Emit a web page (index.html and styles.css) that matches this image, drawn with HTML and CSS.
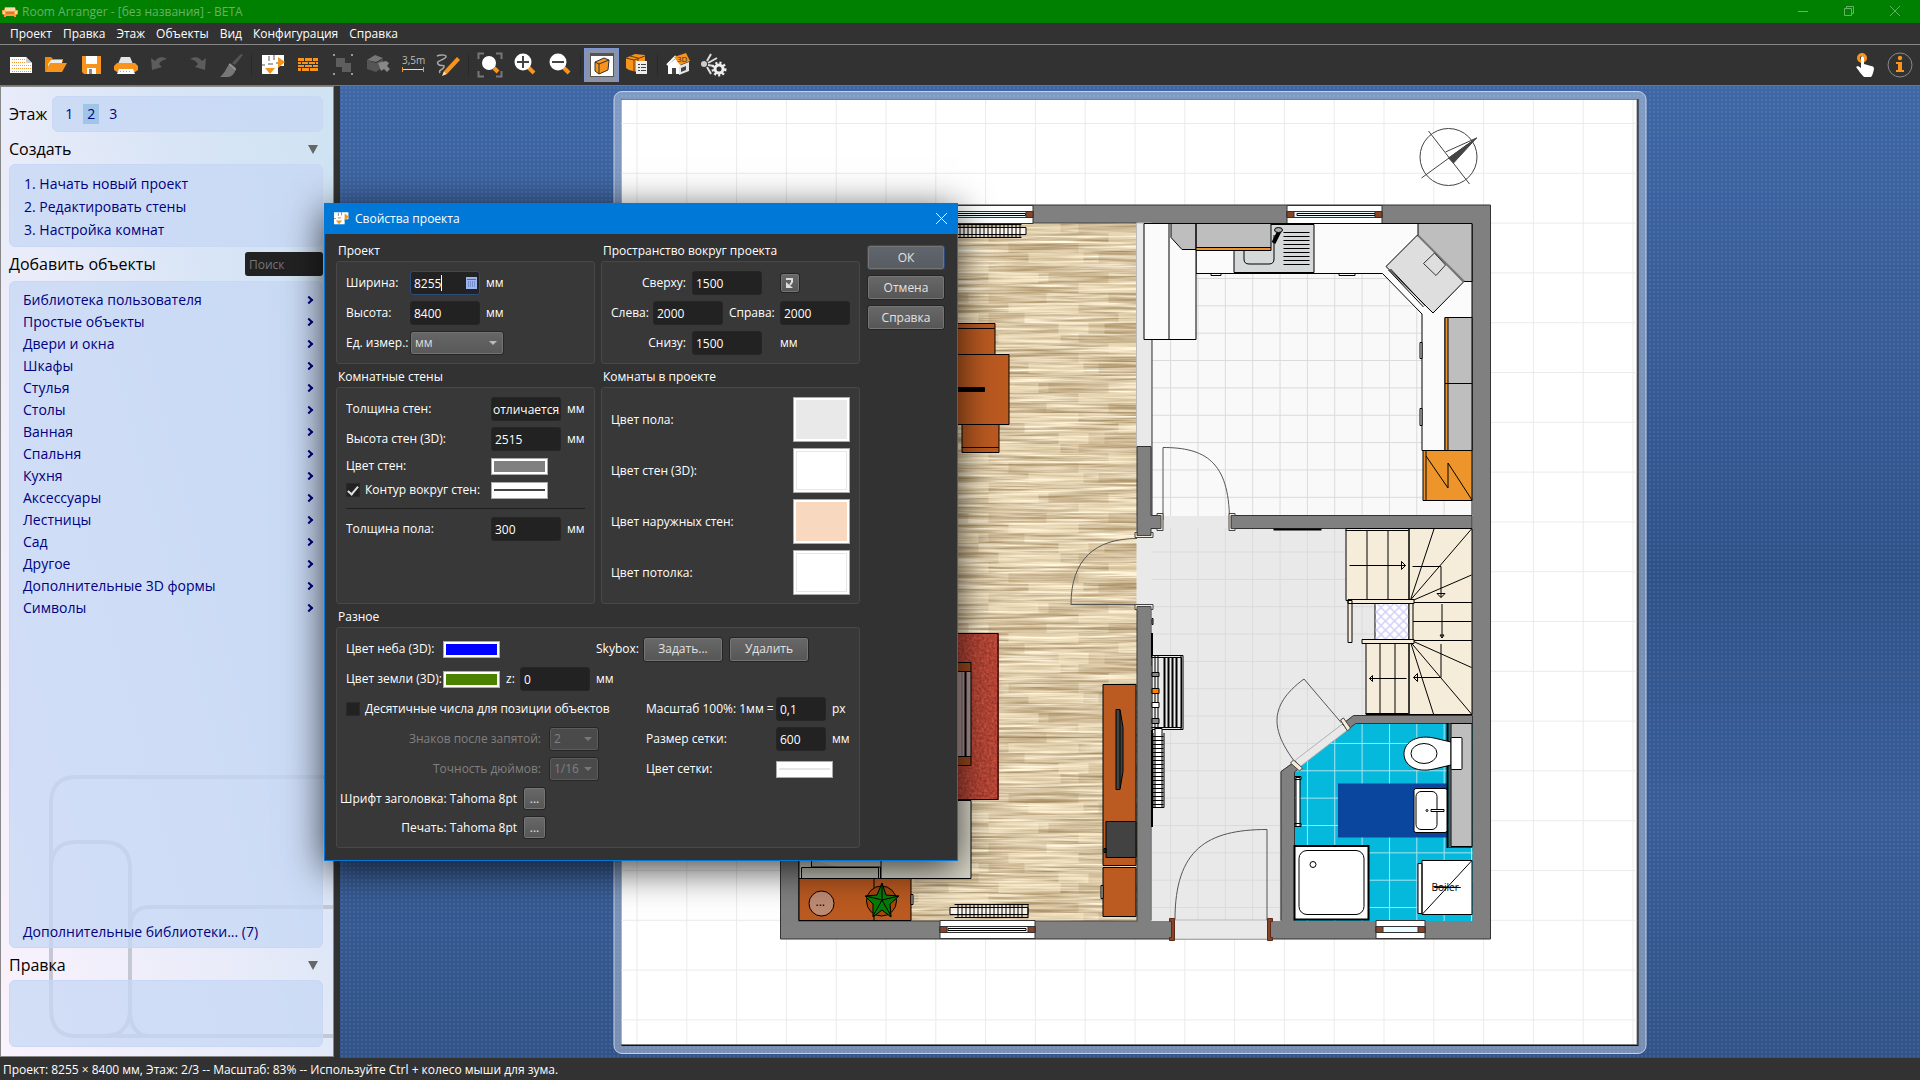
FILE: index.html
```
<!DOCTYPE html>
<html lang="ru">
<head>
    <meta charset="UTF-8">
    <meta name="viewport" content="width=device-width, initial-scale=1.0">
    <title>Room Arranger - [без названия] - BETA</title>
    <link rel="stylesheet" href="styles.css">
</head>
<body>

    <!-- Title bar -->
    <header class="titlebar">
        <svg class="app-icon" width="16" height="10" viewBox="0 0 16 10"><path d="M3 0h10l1 3h2v4l-2 1v2h-2V9H4v1H2V8L0 7V3h2z" fill="#ff9a3c"/><path d="M3 1h10v3H3zM1 4h2v3H1zM13 4h2v3h-2z" fill="#ffd9a8"/><path d="M4 6h8" stroke="#c85a10"/></svg>
        <span class="app-title">Room Arranger - [без названия] - BETA</span>
        <div class="window-buttons">
            <button type="button" aria-label="Свернуть"><svg width="10" height="10" viewBox="0 0 10 10"><path d="M0 5.500h10"/></svg></button>
            <button type="button" aria-label="Развернуть"><svg width="10" height="10" viewBox="0 0 10 10"><path d="M.5 2.500h7v7h-7zM2.500 2V.5h7v7H8"/></svg></button>
            <button type="button" aria-label="Закрыть"><svg width="10" height="10" viewBox="0 0 10 10"><path d="M0 0l10 10M10 0L0 10"/></svg></button>
        </div>
    </header>

    <!-- Menu -->
    <nav class="menu">
        <a href="#">Проект</a>
        <a href="#">Правка</a>
        <a href="#">Этаж</a>
        <a href="#">Объекты</a>
        <a href="#">Вид</a>
        <a href="#">Конфигурация</a>
        <a href="#">Справка</a>
    </nav>

    <!-- Toolbar -->
    <div class="toolbar">
        <button type="button" aria-label="Новый"><svg viewBox="0 0 26 26"><path d="M2 5h16l6 6v10H2z" fill="#fff"/><path d="M18 5v6h6z" fill="#ccc"/><path d="M4 7.500h13M4 10.500h13M4 13.500h19M4 16.500h19M4 19.500h19" stroke="#f39a2b" stroke-dasharray="1 1"/></svg></button>
        <button type="button" aria-label="Открыть"><svg viewBox="0 0 26 26"><path d="M2 20V5h6l2 2h10v3H8z" fill="#f08a00"/><path d="M5 12l3-4h11v3H9l-4 7z" fill="#eee"/><path d="M2 20l5-9h17l-5 9z" fill="#f7941d"/></svg></button>
        <button type="button" aria-label="Сохранить"><svg viewBox="0 0 26 26"><path d="M4 4h19v18H6l-2-2z" fill="#f7941d"/><path d="M8 4h11v8H8zM9 16h9v6H9z" fill="#fff"/><path d="M11 17h3v5h-3z" fill="#888"/></svg></button>
        <button type="button" aria-label="Печать"><svg viewBox="0 0 26 26"><path d="M8 5h9l3 7H5z" fill="#e4e4e4"/><path d="M4 11h18l3 3v4l-3 2H4l-3-2v-4z" fill="#f7941d"/><path d="M6 17h14l2 5H4z" fill="#fff"/><path d="M7 19.500h12" stroke="#f7941d" stroke-dasharray="1 2"/></svg></button>
        <button type="button" aria-label="Отменить" disabled><svg viewBox="0 0 26 26"><path d="M3 6l1 12 10-3-3-3c2-3 4-4 8-5-5-3-9-2-12 2z" fill="#5c5c5c"/></svg></button>
        <button type="button" aria-label="Повторить" disabled><svg viewBox="0 0 26 26"><path d="M23 6l-1 12-10-3 3-3c-2-3-4-4-8-5 5-3 9-2 12 2z" fill="#5c5c5c"/></svg></button>
        <button type="button" aria-label="Очистить" disabled><svg viewBox="0 0 26 26"><path d="M23 2l2 1-8 10-3-2z" fill="#555"/><path d="M12 11l6 5c-1 6-5 9-8 9H2c5-4 6-9 10-14z" fill="#777"/><path d="M11 12l7 6" stroke="#aaa"/></svg></button>
        <span class="separator"></span>
        <button type="button" aria-label="Свойства проекта"><svg viewBox="0 0 26 26"><path d="M2 3h22v11h-6v8H2z" fill="#fff"/><path d="M9 4v5M14 3v5M8 12h5M2 13h3M16 11h3" stroke="#555"/><path d="M18 5l7 5-7 6zM5 16h10l-5 6z" fill="#f7941d"/></svg></button>
        <button type="button" aria-label="Стены"><svg viewBox="0 0 26 26"><path d="M3 6h20v13H3z" fill="#f7941d"/><path d="M3 9.500h20M3 12.500h20M3 15.500h20M9.500 6v3M17.500 6v3M6.500 10v2M13.500 10v2M20.500 10v2M9.500 13v2M17.500 13v2M6.500 16v3M14.500 16v3" stroke="#333"/></svg></button>
        <button type="button" aria-label="Группа" disabled><svg viewBox="0 0 26 26"><path d="M6 6h9v9H6zM12 11h9v9h-9z" fill="#5e5e5e"/><path d="M3 2h2v2H3zM21 2h2v2h-2zM3 21h2v2H3zM21 21h2v2h-2z" fill="#999"/></svg></button>
        <button type="button" aria-label="Объект" disabled><svg viewBox="0 0 26 26"><path d="M2 8l8-5 8 3-7 4z" fill="#777"/><path d="M2 8l9 3v9l-9-3zM11 11l7-4v8l-7 5z" fill="#555"/><path d="M24 11l-2 3 3 3-3 3-3-3-3 2-3-8 8-2z" fill="#888"/></svg></button>
        <button type="button" aria-label="Размеры"><svg viewBox="0 0 26 26"><text x="2" y="12" font-size="10" fill="#bbb">3,5m</text><path d="M3 17.500h20" stroke="#ddd"/><path d="M2.500 15v5M23.500 15v5" stroke="#f7941d"/></svg></button>
        <button type="button" aria-label="Линия"><svg viewBox="0 0 26 26"><path d="M2 4c4-2 12-1 8 2s-9 3-7 6 7 0 6 3-6 3-4 6" fill="none" stroke="#aaa" stroke-width="1.500"/><path d="M9 19L22 5l3 3-13 14z" fill="#f7941d"/><path d="M9 19l3 3-5 2z" fill="#ffe0b0"/></svg></button>
        <span class="separator"></span>
        <button type="button" aria-label="Показать всё"><svg viewBox="0 0 26 26"><path d="M1.500 7V1.500H7M19 1.500h5.500V7M1.500 19v5.500H7M24.500 19v5.500H19" fill="none" stroke="#777" stroke-width="2"/><path d="M17 16l4 4" stroke="#f7941d" stroke-width="4"/><circle cx="12" cy="11" r="7" fill="#fff"/></svg></button>
        <button type="button" aria-label="Увеличить"><svg viewBox="0 0 26 26"><path d="M16 15l6 6" stroke="#f7941d" stroke-width="4"/><circle cx="11" cy="10" r="8.500" fill="#fff"/><path d="M11 4v12M5 10h12" stroke="#444" stroke-width="2"/></svg></button>
        <button type="button" aria-label="Уменьшить"><svg viewBox="0 0 26 26"><path d="M16 15l6 6" stroke="#f7941d" stroke-width="4"/><circle cx="11" cy="10" r="8.500" fill="#fff"/><path d="M5 10h12" stroke="#444" stroke-width="2"/></svg></button>
        <span class="separator"></span>
        <button type="button" class="active" aria-label="Объекты 3D"><svg viewBox="0 0 26 26"><path d="M1 1h24v24H1z" fill="#555"/><path d="M2 4h22v20H2z" fill="#fff"/><path d="M6 10l9-4 5 2-1 10-9 4-4-3z" fill="#f7941d" stroke="#333"/><path d="M6 10l4 2 10-4M10 12v10" fill="none" stroke="#333"/></svg></button>
        <button type="button" aria-label="Список объектов"><svg viewBox="0 0 26 26"><path d="M2 6l9-4 10 1v7l-8 10-8-2-3-2z" fill="#f7941d"/><path d="M2 6l8 2 11-4M10 8v12M6 4l8 2v6" fill="none" stroke="#6b3a00"/><path d="M12 9h11v13H12z" fill="#eee"/><path d="M14 12.500h2M14 15.500h2M14 18.500h2M17 12.500h5M17 15.500h5M17 18.500h5" stroke="#444"/></svg></button>
        <span class="separator"></span>
        <button type="button" aria-label="3D"><svg viewBox="0 0 26 26"><path d="M2 13l7-6 5 7v8H2z" fill="#fff"/><path d="M13 14l10-4v9l-10 4z" fill="#e6e6e6"/><path d="M1 13l8-8 5 9" fill="none" stroke="#fff" stroke-width="2"/><path d="M8 5l12-4 4 8-10 4z" fill="#f7941d"/><path d="M6 16h4v6H6zM15 16l5-2v4l-5 2z" fill="#444"/><text x="11" y="10" font-size="8" fill="#333">3D</text></svg></button>
        <button type="button" aria-label="Визуализация"><svg viewBox="0 0 26 26"><circle cx="3" cy="12" r="3" fill="#ccc"/><path d="M6 9l4-7M7 11l9-5M7 13l6 1M6 15l4 7" stroke="#ddd" stroke-width="2"/><circle cx="18" cy="17" r="4" fill="none" stroke="#eee" stroke-width="3"/><circle cx="18" cy="17" r="6" fill="none" stroke="#eee" stroke-width="3" stroke-dasharray="2 2"/></svg></button>
        <span class="spacer"></span>
        <button type="button" aria-label="Касание"><svg viewBox="0 0 26 26"><circle cx="10" cy="6" r="3.500" fill="none" stroke="#f7941d" stroke-width="3"/><path d="M9 5c1-1 3-1 3 1v6l7 2c2 0 3 1 3 3-1 5-2 7-3 8h-7c-3-3-5-6-8-10l2-1 3 2z" fill="#fff"/></svg></button>
        <button type="button" aria-label="Сведения"><svg viewBox="0 0 26 26"><circle cx="13" cy="13" r="12" fill="none" stroke="#888"/><circle cx="13" cy="6" r="2.200" fill="#f7941d"/><path d="M9 10h6v8h2v2H9v-2h2v-6H9z" fill="#f7941d"/></svg></button>
    </div>

    <main class="workspace">
        <!-- Side panel -->
        <aside class="sidebar">
            <svg class="sidebar-art" width="284" height="264" viewBox="0 0 284 264"><g fill="none" stroke="#c3c8d4" stroke-width="4"><path d="M284 3H27Q2 3 2 30v205q0 27 25 27h257"/><path d="M2 95q0-27 25-27h27q27 0 27 27v140q0 27-27 27"/><path d="M284 133H101q-20 0-20 22v80q0 27 20 27"/></g></svg>
            <div class="floor">
                <h2>Этаж</h2>
                <div class="panel floor-list">
                    <button type="button">1</button>
                    <button type="button" class="current">2</button>
                    <button type="button">3</button>
                </div>
            </div>
            <div class="panel-title"><h2>Создать</h2><span class="triangle"></span></div>
            <div class="panel steps">
                <a href="#">1. Начать новый проект</a>
                <a href="#">2. Редактировать стены</a>
                <a href="#">3. Настройка комнат</a>
            </div>
            <div class="panel-title search-title">
                <h2>Добавить объекты</h2>
                <input type="text" class="search" placeholder="Поиск" aria-label="Поиск">
            </div>
            <div class="panel library">
                <a href="#">Библиотека пользователя<span class="chevron"></span></a>
                <a href="#">Простые объекты<span class="chevron"></span></a>
                <a href="#">Двери и окна<span class="chevron"></span></a>
                <a href="#">Шкафы<span class="chevron"></span></a>
                <a href="#">Стулья<span class="chevron"></span></a>
                <a href="#">Столы<span class="chevron"></span></a>
                <a href="#">Ванная<span class="chevron"></span></a>
                <a href="#">Спальня<span class="chevron"></span></a>
                <a href="#">Кухня<span class="chevron"></span></a>
                <a href="#">Аксессуары<span class="chevron"></span></a>
                <a href="#">Лестницы<span class="chevron"></span></a>
                <a href="#">Сад<span class="chevron"></span></a>
                <a href="#">Другое<span class="chevron"></span></a>
                <a href="#">Дополнительные 3D формы<span class="chevron"></span></a>
                <a href="#">Символы<span class="chevron"></span></a>
                <a href="#" class="more">Дополнительные библиотеки... (7)</a>
            </div>
            <div class="panel-title edit-title"><h2>Правка</h2><span class="triangle"></span></div>
            <div class="panel edit"></div>
        </aside>

        <!-- Floor plan -->
        <section class="canvas">
            <svg class="plan" viewBox="614 91 1033 963">
                <defs>
                    <pattern id="grid" x="637" y="123" width="49.800" height="49.800" patternUnits="userSpaceOnUse"><path d="M.5 0v49.800M0 .5h49.800" stroke="#ebebeb"/></pattern>
                    <pattern id="tiles" x="1198" y="278" width="27.350" height="27.350" patternUnits="userSpaceOnUse"><path d="M.5 0v27.350M0 .5h27.350" stroke="#dadada"/></pattern>
                    <pattern id="bathTiles" x="1198" y="278" width="27.350" height="27.350" patternUnits="userSpaceOnUse"><path d="M.5 0v27.350M0 .5h27.350" stroke="#a9e3ef"/></pattern>
                    <pattern id="planks" x="799" y="223" width="190" height="110" patternUnits="userSpaceOnUse">
                        <g fill="#fff0cf" opacity=".42"><path d="M10 0h62v10H10zM120 10h70v10h-70zM40 30h55v10H40zM150 40h40v10h-40zM0 50h50v10H0zM90 60h64v10H90zM20 80h70v10H20zM130 90h50v10h-50zM70 100h46v10H70z"/></g>
                        <g fill="#8f6f45" opacity=".18"><path d="M90 0h60v10H90zM20 20h70v10H20zM110 30h45v10h-45zM60 50h60v10H60zM0 70h58v10H0zM120 70h50v10h-50zM100 100h80v10h-80zM0 90h36v10H0z"/></g>
                    </pattern>
                    <pattern id="lattice" width="9" height="9" patternUnits="userSpaceOnUse"><path d="M0 0l9 9M9 0L0 9" stroke="#cfcffb" stroke-width="1.500"/></pattern>
                    <filter id="grain" x="0" y="0" width="100%" height="100%" color-interpolation-filters="sRGB">
                        <feTurbulence type="fractalNoise" baseFrequency=".012 .36" numOctaves="3" seed="7"/>
                        <feColorMatrix values=".6 0 0 0 .56  .68 0 0 0 .45  .8 0 0 0 .26  0 0 0 0 1"/>
                    </filter>
                    <filter id="pile" x="0" y="0" width="100%" height="100%" color-interpolation-filters="sRGB">
                        <feTurbulence type="fractalNoise" baseFrequency=".4" numOctaves="2" seed="3"/>
                        <feColorMatrix values=".35 0 0 0 .53  .2 0 0 0 .17  .18 0 0 0 .12  0 0 0 0 1"/>
                    </filter>
                </defs>

                <!-- Sheet -->
                <rect x="614.500" y="91.500" width="1032" height="962" rx="8" fill="#fff" fill-opacity=".34" stroke="#c5d1e6"/>
                <path d="M622 99h1017v947H622z" fill="#111"/>
                <path d="M622 99h1016v946H622z" fill="#808080"/>
                <path d="M622 100h1015v944H622z" fill="#fff"/>
                <path d="M622 100h1015v944H622z" fill="url(#grid)"/>

                <!-- Compass -->
                <g fill="none" stroke="#444"><circle cx="1449" cy="157" r="28.500"/><path d="M1429 131l41 53M1422 178l55-40-31 14"/><path d="M1477 138l-28 20 5 5z" fill="#444"/></g>

                <!-- Floors -->
                <path d="M781 205h710v734H781z" fill="#808080" stroke="#333"/>
                <rect x="799" y="223" width="339" height="698" filter="url(#grain)"/>
                <path d="M799 223h339v698H799z" fill="url(#planks)" stroke="#444"/>
                <path d="M1137 223h15v224h-15z" fill="#e9e9e9" stroke="#bbb"/>
                <path d="M1152 223h321v293h-321z" fill="#f9f9f9"/>
                <path d="M1152 223h321v293h-321z" fill="url(#tiles)"/>
                <path d="M1137 516h336v200h-120l-72 56v149h-130V610h-14z" fill="#e9e9e9"/>
                <path d="M1152 528h321v188h-120l-72 56v149h-129z" fill="url(#tiles)"/>
                <path d="M1174 920h95v19h-95z" fill="#e9e9e9" stroke="#bbb"/>
                <path d="M1295 771l60-47h118v197h-178z" fill="#05b9dd"/>
                <path d="M1295 771l60-47h118v197h-178z" fill="url(#bathTiles)"/>
                <path d="M1300 767l48-37-5-6-47 36" fill="#e9e9e9" stroke="#b5b5b5"/>

                <!-- Inner walls -->
                <g fill="#808080" stroke="#333">
                    <path d="M1137.500 446.500h14v69h11v13h-11v8h-14z"/>
                    <path d="M1231.500 515.500h241v13h-241z"/>
                    <path d="M1137.500 607v313.500M1151.500 607v313.500"/>
                    <path d="M1343 724l11-8.500h119v8h-117l-8 6.500z"/>
                    <path d="M1281.500 920.500v-149l14-10 5 6-5.500 4.500v148.500"/>
                    <path d="M1449.500 723.500h23v124h-23z"/>
                </g>
                <path d="M1138 607h13v314h-13z" fill="#808080"/>
                <path d="M1152.500 516V223.500h320V515M1472.500 529V715" fill="none" stroke="#333"/>

                <!-- Windows -->
                <g stroke="#333">
                    <path d="M935.500 205.500h98v18h-98zM1287.500 205.500h95v18h-95zM940.500 920.500h95v18h-95zM1376.500 920.500h49v18h-49z" fill="#fff"/>
                    <path d="M935.500 211.500h98v6h-98zM1287.500 211.500h95v6h-95zM940.500 926.500h95v6h-95zM1376.500 926.500h49v6h-49z" fill="#eafcff"/>
                    <path d="M940 213.500h86v2h-86zM1297.500 213.500h78v2h-78zM948.500 928.500h78v2h-78z" fill="#fff" stroke="#000"/>
                    <path d="M1026.500 211.500h7v6h-7zM1287.500 211.500h7v6h-7zM1375.500 211.500h7v6h-7zM940.500 926.500h7v6h-7zM1028.500 926.500h7v6h-7zM1376.500 926.500h7v6h-7zM1418.500 926.500h7v6h-7z" fill="#8b4326"/>
                </g>

                <!-- Doors -->
                <g fill="none" stroke="#555">
                    <path d="M1163.500 520v-72.500c42 0 66 14 66.500 72"/>
                    <path d="M1137 604.500h-65.500c0-45 24-66 66-66"/>
                    <path d="M1342 723l-37.500-44c-38 28-32 54-6 87"/>
                    <path d="M1267.500 920v-90.500c-60 0-92 20-92 90"/>
                </g>
                <g fill="#f5edda" stroke="#444">
                    <path d="M1157.500 513.500h6v17h-6v-2h4v-13h-4zM1235.500 513.500h-6v17h6v-2h-4v-13h4zM1135.500 537.500v-5h2v3h14v-3h2v5zM1135.500 604.500v5h2v-3h14v3h2v-5z"/>
                    <path d="M1341 720l3-2 7 10-3 3zM1291 763l3-3 9 8-3 3z"/>
                </g>
                <path d="M1170 918.500h5v22h-5v-3h2v-16h-2zM1273 918.500h-5v22h5v-3h-2v-16h2z" fill="#8b4326" stroke="#5a2a18"/>

                <!-- Living room -->
                <g stroke="#000">
                    <path d="M948 224.500h74M948 237.500h74"/>
                    <path d="M940.500 227.500h86v7h-86z" fill="#fff" fill-opacity=".8"/>
                    <path d="M952.500 224v13M956.500 224v13M960.500 224v13M964.500 224v13M968.500 224v13M972.500 224v13M976.500 224v13M980.500 224v13M984.500 224v13M988.500 224v13M992.500 224v13M996.500 224v13M1000.500 224v13M1004.500 224v13M1008.500 224v13M1012.500 224v13M1016.500 224v13M1020.500 224v13"/>
                    <g fill="#bb5a21">
                        <path d="M930.500 323.500h65v31h-65zM962.500 424.500h37v28h-37zM920.500 354.500h89v70h-89z"/>
                        <path d="M930 328.500h65M962 447.500h37M900 387.500h85v4h-85z" fill="#000"/>
                        <path d="M1103.500 684.500h33v181h-33zM1103.500 867.500h33v49h-33z"/>
                        <path d="M799.500 878.500h112v42h-112zM874.500 878.500v42"/>
                    </g>
                    <path d="M1106.500 821.500h30v36h-30zM1104.500 848.500h2v4h-2z" fill="#424242"/>
                    <path d="M1116.500 709.500h4l3 18v44l-3 18h-4zM1120.500 710v78" fill="#424242"/>
                    <path d="M1101.500 885.500h2v13h-2zM911.500 894.500h2v10h-2z" fill="#ddd"/>
                    <path d="M799.500 800.500h172v78h-172z" fill="#dfddce"/>
                    <path d="M802 867.500h77v11h-77zM812 860v7h69v11M881.500 860v18" fill="#cbc9bc"/>
                    <rect x="900" y="633" width="99" height="167" filter="url(#pile)" stroke="none"/>
                    <path d="M900.500 633.500h98v166h-98z" fill="none"/>
                    <path d="M920.500 671.500h51v85h-51z" fill="#b29694"/>
                    <path d="M962.500 672v84" stroke="#667" />
                    <path d="M966 672v84" stroke-width="2"/>
                    <path d="M920.500 662.500h51v9h-51zM920.500 756.500h51v9h-51z" fill="#9a4a1c"/>
                    <circle cx="822" cy="903.500" r="12.500" fill="#be8b74"/>
                    <circle cx="882" cy="901" r="15" fill="#a8480c"/>
                    <path d="M882.500 883l4 12 13 1-9 8 1 13-9-7-9 7V904l-8-8 12-1z" fill="#087c08"/>
                    <path d="M882.500 900v-17M882.500 900l17-4M882.500 900l9 16M882.500 900l-9 16M882.500 900l-16-4"/>
                    <path d="M955 904.500h74M955 917.500h74"/>
                    <path d="M950.500 907.500h78v7h-78z" fill="#fff" fill-opacity=".8"/>
                    <path d="M958.500 904v13M962.500 904v13M966.500 904v13M970.500 904v13M974.500 904v13M978.500 904v13M982.500 904v13M986.500 904v13M990.500 904v13M994.500 904v13M998.500 904v13M1002.500 904v13M1006.500 904v13M1010.500 904v13M1014.500 904v13M1018.500 904v13M1022.500 904v13M1028.500 904v13"/>
                </g>
                <text x="816" y="906" font-size="12">...</text>

                <!-- Kitchen -->
                <g stroke="#000" fill="#fbfbfb">
                    <path d="M1196.500 223.500h276v227h-50V314l-39.500-40.500h-186.500z"/>
                    <path d="M1144.500 223.500h52v116h-52zM1169.500 223.500v116"/>
                    <path d="M1211.500 273.500h10v2h-10zM1339.500 273.500h16v2h-16zM1420.500 342.500h2v16h-2zM1420.500 408.500h2v17h-2z"/>
                    <path d="M1234.500 224.500h80v48h-80z" fill="#d5d9da"/>
                    <path d="M1244.500 235v24q0 5 5 5h20q5 0 5-5v-24" fill="none"/>
                    <path d="M1284 232.500h26M1284 236.500h26M1284 240.500h26M1284 244.500h26M1284 248.500h26M1284 252.500h26M1284 256.500h26M1284 260.500h26M1284 264.500h26"/>
                    <path d="M1171.500 223.500h25v26h-14l-11-12zM1196.500 223.500h75v24h-75z" fill="#bebebe"/>
                    <path d="M1196.500 247.500h75v3h-75z" fill="#ed942a"/>
                    <path d="M1280 231l-6 12" stroke-width="4"/>
                    <ellipse cx="1279" cy="230" rx="4" ry="2.500" fill="#aaa"/>
                    <path d="M1418.500 223.500h54v58h-8l-46-46z" fill="#bebebe"/>
                    <path d="M1418 235l46 47-30.500 31-47-46.500z" fill="#dedede"/>
                    <path d="M1418.500 235.500l46 46" stroke="#777" stroke-width="2"/>
                    <path d="M1424 263.500l11-10.500 11 12-9.500 10.500z" fill="none" stroke="#333"/>
                    <path d="M1389 270l35 37M1391 269l35 37" fill="none"/>
                    <path d="M1445.500 317.500h27v133h-27zM1445.500 383.500h27" fill="#bebebe"/>
                    <path d="M1445.500 317.500h3v66h-3zM1445.500 383.500h3v67h-3zM1423.500 450.500h49v50h-49z" fill="#ed942a"/>
                    <path d="M1426.500 450v50M1426.500 456l22 32v-25l24 37" fill="none"/>
                </g>

                <!-- Hall and stairs -->
                <path d="M1274 529.500h48M1152.500 633v33M1152.500 730v97" stroke="#000" stroke-width="2"/>
                <g stroke="#000" fill="#f5edda">
                    <path d="M1346.500 528.500h63v72h-63zM1409.500 528.500h63v74h-63zM1409.500 602.500h63v38h-63zM1409.500 640.500h63v74h-63zM1366.500 643.500h43v71h-43z"/>
                    <path d="M1346 530.500h63M1367.500 530v70M1388.500 530v70M1411 600l23.500-71M1411 600l61-71M1412 601l60-26M1413 621.500h59M1411 642l23 72M1411 642l61 72M1413 641l59 26.500M1380.500 643v71M1395.500 643v71M1366 713.500h43" fill="none"/>
                    <path d="M1375.500 603.500h34v36h-34z" fill="#fff"/>
                    <path d="M1375.500 603.500h34v36h-34z" fill="url(#lattice)" stroke="#777"/>
                    <path d="M1348.500 600.500h4v42h-4zM1348.500 599.500h66v4h-66zM1409.500 603.500h4v36h-4zM1362.500 639.500h52v4h-52z"/>
                    <path d="M1350 565.500h56l-4-4v8l4-4M1413 566.500h28.500v31l-4-4h8l-4 4M1442.500 604v34l-2-3h4l-2 3M1441.500 644v33.500H1414l4-4v8l-4-4M1407 678.500h-37l3-3v6l-3-3" fill="none"/>
                    <g fill="#ececec">
                        <path d="M1152.500 655.500h31v74h-31zM1152 657.500h30v70h-30"/>
                        <path d="M1155.500 655v74M1158.500 655v74M1181.500 655v74" fill="none"/>
                        <path d="M1165 658v69M1169 658v69M1173 658v69M1177 658v69" fill="none" stroke-width="2"/>
                        <path d="M1152.500 672.500h7v4h-7zM1152.500 718.500h7v5h-7z" fill="#888"/>
                        <path d="M1152.500 688.500h7v5h-7z" fill="#ff8000"/>
                        <path d="M1152.500 702.500h7v5h-7zM1155.500 728.500h7v79h-7zM1152.500 618.500h1v6h-1z" fill="#fff"/>
                        <path d="M1153.500 733v74.500h11V733M1153 736.500h11M1153 740.500h11M1153 744.500h11M1153 748.500h11M1153 752.500h11M1153 756.500h11M1153 760.500h11M1153 764.500h11M1153 768.500h11M1153 772.500h11M1153 776.500h11M1153 780.500h11M1153 784.500h11M1153 788.500h11M1153 792.500h11M1153 796.500h11M1153 800.500h11M1153 804.500h11" fill="none"/>
                    </g>
                </g>

                <!-- Bathroom -->
                <path d="M1338.500 783.500h109v54h-109z" fill="#0a469d"/>
                <g stroke="#000" fill="#fff">
                    <path d="M1448 723v125" stroke-width="2"/>
                    <path d="M1451.500 723.500h21v123h-21z" fill="#bebebe"/>
                    <path d="M1451.500 742l-17-4c-40-8-40 40 0 31l17-4z"/>
                    <rect x="1451.500" y="737.500" width="11" height="32" rx="1"/>
                    <ellipse cx="1424.500" cy="753.500" rx="13" ry="10"/>
                    <rect x="1414.500" y="788.500" width="33" height="44" rx="2"/>
                    <rect x="1416.500" y="791.500" width="21" height="38" rx="5"/>
                    <path d="M1431.500 809.500h13v2h-13z"/>
                    <circle cx="1427.500" cy="810.500" r="1"/>
                    <path d="M1296.500 777.500h4v49h-4zM1295.500 776.500h6v3h-6zM1295.500 823.500h6v3h-6z"/>
                    <path d="M1295 846h74v73.500h-74z" stroke-width="2"/>
                    <rect x="1299.500" y="850.500" width="65" height="64" rx="8"/>
                    <circle cx="1313.500" cy="864.500" r="3"/>
                    <path d="M1418.500 863.500h4v50h-4zM1422.500 860.500h50v54h-50z"/>
                    <path d="M1423 914l49-53M1435 887.500h26l-26-1z" fill="none"/>
                </g>
                <text x="1432" y="891" font-size="10" fill="#001">Boiler</text>
            </svg>
        </section>
    </main>

    <footer class="statusbar">Проект: 8255 × 8400 мм, Этаж: 2/3 -- Масштаб: 83% -- Используйте Ctrl + колесо мыши для зума.</footer>

    <!-- Project properties dialog -->
    <form class="dialog" role="dialog" aria-labelledby="dialog-title">
        <div class="dialog-head">
            <svg width="15" height="13" viewBox="0 0 24 20"><path d="M0 0h23v11h-6v8H0z" fill="#fff"/><path d="M7 1v5M12 0v5M6 9h5M0 10h3" stroke="#555"/><path d="M17 2l7 5-7 6zM3 13h10l-5 6z" fill="#f7941d"/></svg>
            <h1 id="dialog-title">Свойства проекта</h1>
            <button type="button" class="close" aria-label="Закрыть"><svg width="11" height="11" viewBox="0 0 11 11"><path d="M0 0l11 11M11 0L0 11"/></svg></button>
        </div>
        <div class="dialog-body">
            <div class="groups">
                <section>
                    <h3>Проект</h3>
                    <div class="group size-grid">
                        <label for="width">Ширина:</label>
                        <span class="calc-field"><input id="width" class="field focused" type="text" value="8255"><span class="caret"></span><svg class="calc" width="11" height="12" viewBox="0 0 11 12"><path d="M0 0h11v12H0z" fill="#9db4ee"/><path d="M1 2.500h9" stroke="#5068b0"/><path d="M2 5h7M2 7h7M2 9h7" stroke="#5068b0" stroke-dasharray="1 1"/></svg></span>
                        <span>мм</span>
                        <label for="height">Высота:</label>
                        <input id="height" class="field" type="text" value="8400">
                        <span>мм</span>
                        <label for="unit">Ед. измер.:</label>
                        <span class="select unit-select"><select id="unit"><option>мм</option></select></span>
                    </div>
                </section>
                <section>
                    <h3>Пространство вокруг проекта</h3>
                    <div class="group">
                        <div class="row"><label class="space-label" for="top">Сверху:</label><input id="top" class="field" type="text" value="1500"><button type="button" class="btn tiny" aria-label="Применить"><svg width="10" height="12" viewBox="0 0 10 12"><path d="M1 2h6v3L5 8" fill="none" stroke="#ddd" stroke-width="2"/><path d="M1 5v6h7z" fill="#ddd"/></svg></button></div>
                        <div class="row"><label class="left-label" for="left">Слева:</label><input id="left" class="field" type="text" value="2000"><label class="right-label" for="right">Справа:</label><input id="right" class="field" type="text" value="2000"></div>
                        <div class="row"><label class="space-label" for="bottom">Снизу:</label><input id="bottom" class="field" type="text" value="1500"><span class="space-unit">мм</span></div>
                    </div>
                </section>
                <section>
                    <h3>Комнатные стены</h3>
                    <div class="group wall-grid">
                        <label for="wall">Толщина стен:</label>
                        <input id="wall" class="field tight" type="text" value="отличается.">
                        <span>мм</span>
                        <label for="wall-height">Высота стен (3D):</label>
                        <input id="wall-height" class="field" type="text" value="2515">
                        <span>мм</span>
                        <label for="wall-color">Цвет стен:</label>
                        <button type="button" id="wall-color" class="swatch gray"></button>
                        <span></span>
                        <label class="check-label"><input type="checkbox" checked>Контур вокруг стен:</label>
                        <button type="button" class="swatch dark-line" aria-label="Цвет контура"></button>
                        <span></span>
                        <hr>
                        <label for="floor-depth">Толщина пола:</label>
                        <input id="floor-depth" class="field" type="text" value="300">
                        <span>мм</span>
                    </div>
                </section>
                <section>
                    <h3>Комнаты в проекте</h3>
                    <div class="group color-list">
                        <div class="color-row"><label for="c-floor">Цвет пола:</label><button type="button" id="c-floor" class="swatch big light"></button></div>
                        <div class="color-row"><label for="c-wall">Цвет стен (3D):</label><button type="button" id="c-wall" class="swatch big white"></button></div>
                        <div class="color-row"><label for="c-outer">Цвет наружных стен:</label><button type="button" id="c-outer" class="swatch big peach"></button></div>
                        <div class="color-row"><label for="c-ceiling">Цвет потолка:</label><button type="button" id="c-ceiling" class="swatch big white"></button></div>
                    </div>
                </section>
                <section class="wide">
                    <h3>Разное</h3>
                    <div class="group">
                        <div class="row">
                            <label class="sky-label" for="sky">Цвет неба (3D):</label>
                            <button type="button" id="sky" class="swatch blue"></button>
                            <span class="skybox">Skybox:</span>
                            <button type="button" class="btn">Задать...</button>
                            <button type="button" class="btn">Удалить</button>
                        </div>
                        <div class="row">
                            <label class="sky-label" for="ground">Цвет земли (3D):</label>
                            <button type="button" id="ground" class="swatch green"></button>
                            <label class="z-label" for="z">z:</label>
                            <input id="z" class="field" type="text" value="0">
                            <span>мм</span>
                        </div>
                        <div class="row">
                            <label class="half check-label"><input type="checkbox">Десятичные числа для позиции объектов</label>
                            <label class="scale-label" for="scale">Масштаб 100%: 1мм =</label>
                            <input id="scale" class="field short" type="text" value="0,1">
                            <span>px</span>
                        </div>
                        <div class="row">
                            <div class="half right disabled"><label for="digits">Знаков после запятой:</label><span class="select"><select id="digits" disabled><option>2</option></select></span></div>
                            <label class="scale-label" for="step">Размер сетки:</label>
                            <input id="step" class="field short" type="text" value="600">
                            <span>мм</span>
                        </div>
                        <div class="row">
                            <div class="half right disabled"><label for="inches">Точность дюймов:</label><span class="select"><select id="inches" disabled><option>1/16</option></select></span></div>
                            <label class="scale-label" for="grid-color">Цвет сетки:</label>
                            <button type="button" id="grid-color" class="swatch light-line"></button>
                        </div>
                        <div class="row font-row"><label for="title-font">Шрифт заголовка: Tahoma 8pt</label><button type="button" id="title-font" class="btn dots">...</button></div>
                        <div class="row font-row"><label for="print-font">Печать: Tahoma 8pt</label><button type="button" id="print-font" class="btn dots">...</button></div>
                    </div>
                </section>
            </div>
            <div class="actions">
                <button type="submit" class="btn primary">ОК</button>
                <button type="button" class="btn">Отмена</button>
                <button type="button" class="btn">Справка</button>
            </div>
        </div>
    </form>

</body>
</html>
```
FILE: styles.css
```
/* Global Styles */
* {
    box-sizing: border-box;
}

body {
    display: flex;
    flex-direction: column;
    height: 100vh;
    margin: 0;
    overflow: hidden;
    background-color: #323232;
    color: #fff;
    font-family: "Open Sans", "Noto Sans", sans-serif;
    font-size: 12px;
    line-height: 16px;
}

h1, h2, h3 {
    margin: 0;
    font-weight: normal;
}

button, input, select {
    font: inherit;
    color: inherit;
}

a {
    text-decoration: none;
}

/* Title bar */
.titlebar {
    display: flex;
    align-items: center;
    height: 23px;
    padding-left: 2px;
    background-color: #008000;
    color: #66b266;
}

.app-title {
    margin-left: 4px;
}

.window-buttons {
    display: flex;
    margin: 0 2px 0 auto;
}

.window-buttons button {
    width: 46px;
    height: 20px;
    padding: 0;
    border: none;
    background: none;
}

.window-buttons svg {
    fill: none;
    stroke: #66b266;
}

/* Menu and toolbar */
.menu {
    display: flex;
    gap: 11px;
    height: 22px;
    padding: 3px 10px;
    border-bottom: 1px solid #888;
}

.menu a {
    color: #fff;
}

.toolbar {
    display: flex;
    align-items: center;
    height: 41px;
    padding: 0 3px;
    border-bottom: 1px solid #777;
}

.toolbar button {
    width: 35px;
    height: 34px;
    padding: 0;
    border: 1px solid transparent;
    background: none;
}

.toolbar svg {
    display: block;
    width: 26px;
    height: 26px;
    margin: auto;
}

.toolbar .active {
    border-color: #7b96d6;
    background-color: #8d93a6;
}

.separator {
    width: 1px;
    height: 22px;
    margin: 0 3px;
    background-color: #292929;
}

.spacer {
    flex: 1;
}

.workspace {
    display: flex;
    flex: 1;
    min-height: 0;
}

/* Side panel */
.sidebar {
    position: relative;
    display: flex;
    flex-direction: column;
    width: 334px;
    margin: 0 6px 1px 0;
    padding: 9px 10px 9px 8px;
    border: 1px solid #888;
    background: linear-gradient(75deg, #faf2fd 0%, #e8ebf9 45%, #d8e5f6 70%, #cfe3f3 100%);
    color: #000;
    font-size: 14px;
    line-height: 22px;
}

.sidebar > * {
    position: relative;
}

.sidebar .sidebar-art {
    position: absolute;
    right: 0;
    bottom: 18px;
}

.sidebar h2 {
    font-size: 16px;
    line-height: 22px;
}

.sidebar a {
    color: #000080;
}

.panel {
    border: 1px solid #c8d8f4;
    border-radius: 6px;
    background-color: rgba(198, 215, 244, 0.75);
}

.floor {
    display: flex;
    align-items: center;
    gap: 5px;
}

.floor-list {
    display: flex;
    flex: 1;
    align-items: center;
    gap: 6px;
    height: 36px;
    padding-left: 8px;
}

.floor-list button {
    width: 16px;
    height: 20px;
    padding: 0;
    border: none;
    background: none;
    color: #000080;
    line-height: 20px;
}

.floor-list .current {
    background-color: #9fc6e6;
}

.panel-title {
    display: flex;
    align-items: center;
    justify-content: space-between;
    height: 32px;
    padding: 2px 5px 0 0;
}

.triangle {
    border: 5px solid transparent;
    border-top: 9px solid #666;
    border-bottom: none;
}

.steps {
    display: flex;
    flex-direction: column;
    height: 83px;
    padding: 7px 14px;
    line-height: 23px;
}

.search-title {
    height: 34px;
    padding: 0;
}

.search {
    width: 78px;
    height: 24px;
    padding: 0 4px;
    border: none;
    border-radius: 3px;
    background-color: #222;
    color: #fff;
    font-size: 12px;
}

.library {
    display: flex;
    flex: 1;
    flex-direction: column;
    padding: 7px 10px 4px 13px;
}

.library a {
    display: flex;
    align-items: center;
    justify-content: space-between;
}

.library .more {
    margin-top: auto;
}

.chevron {
    width: 6px;
    height: 6px;
    border: solid #000080;
    border-width: 2px 2px 0 0;
    transform: rotate(45deg);
}

.edit {
    height: 67px;
}

/* Floor plan */
.canvas {
    flex: 1;
    min-width: 0;
    padding: 5px 0 4px;
    background:
        radial-gradient(circle, rgba(255, 255, 255, 0.08) 1px, transparent 1px) 0 0 / 4px 4px,
        linear-gradient(#3f67a5, #30528a 50%, #385d97 75%, #315389);
}

.plan {
    display: block;
    width: 100%;
    height: 100%;
}

.statusbar {
    height: 22px;
    padding: 4px 3px 2px;
}

/* Dialog */
.dialog {
    position: absolute;
    top: 203px;
    left: 324px;
    border: 1px solid #0078d7;
    border-top: none;
    background-color: #323232;
    box-shadow: 0 8px 36px rgba(0, 0, 0, 0.75);
}

.dialog-head {
    display: flex;
    align-items: center;
    gap: 6px;
    height: 31px;
    padding: 0 10px 0 9px;
    background-color: #0078d7;
}

.dialog-head h1 {
    font-size: 12px;
}

.close {
    margin-left: auto;
    padding: 0;
    border: none;
    background: none;
}

.close svg {
    display: block;
    fill: none;
    stroke: #fff;
}

.dialog-body {
    display: flex;
    gap: 7px;
    padding: 6px 12px 12px 11px;
}

.groups {
    display: grid;
    grid-template-columns: 259px 259px;
    column-gap: 6px;
    row-gap: 2px;
}

.groups section {
    display: flex;
    flex-direction: column;
}

.wide {
    grid-column: 1 / 3;
}

h3 {
    padding-left: 2px;
    font-size: 12px;
    line-height: 21px;
}

.group {
    display: flex;
    flex: 1;
    flex-direction: column;
    gap: 6px;
    padding: 9px 9px 8px;
    border: 1px solid #484848;
    border-radius: 3px;
    background-color: #383838;
    white-space: nowrap;
}

.group.size-grid {
    display: grid;
    grid-template-columns: 58px 70px 1fr;
    grid-auto-rows: 24px;
    column-gap: 6px;
    align-items: center;
}

.group.wall-grid {
    display: grid;
    grid-template-columns: 139px 70px 1fr;
    grid-template-rows: 24px 24px 18px 18px 6px 24px;
    column-gap: 6px;
    align-items: center;
    align-content: start;
}

.wall-grid hr {
    grid-column: 1 / 4;
    width: 100%;
    margin: 0;
    border: none;
    border-top: 1px solid #1f1f1f;
}

.row {
    display: flex;
    align-items: center;
    gap: 6px;
    height: 24px;
}

.field {
    width: 70px;
    height: 24px;
    padding: 0 3px;
    border: 1px solid #262626;
    border-radius: 3px;
    background-color: #222;
}

.field.short {
    width: 50px;
}

.field.tight {
    padding: 0 0 0 1px;
}

.field.focused {
    border-color: #2d4a7c;
}

.calc-field {
    position: relative;
}

.calc-field .field {
    display: block;
}

.calc {
    position: absolute;
    top: 6px;
    right: 3px;
}

.caret {
    position: absolute;
    top: 4px;
    left: 31px;
    width: 1px;
    height: 16px;
    background-color: #fff;
}

.select {
    position: relative;
    display: block;
    width: 50px;
}

.select::after {
    content: "";
    position: absolute;
    top: 10px;
    right: 7px;
    border: 4px solid transparent;
    border-top-color: #bbb;
    border-bottom: none;
}

select {
    display: block;
    width: 100%;
    height: 24px;
    padding: 0 4px;
    border: 1px solid #262626;
    border-radius: 3px;
    background: linear-gradient(#666, #585858);
    box-shadow: inset 0 0 0 1px #737373;
    color: #ddd;
    appearance: none;
}

.unit-select {
    grid-column: 2 / 4;
    width: 94px;
}

.disabled {
    color: #808080;
}

.disabled select {
    background: #4a4a4a;
    box-shadow: inset 0 0 0 1px #5c5c5c;
    color: #808080;
    opacity: 1;
}

.disabled .select::after {
    border-top-color: #777;
}

.btn {
    flex: none;
    width: 80px;
    height: 25px;
    padding: 0;
    border: 1px solid #242424;
    border-radius: 3px;
    background: linear-gradient(#686868, #565656);
    box-shadow: inset 0 0 0 1px #757575;
    color: #e2e2e2;
}

.btn.primary {
    border-color: #2d4a7c;
    background: linear-gradient(#62666e, #575b62);
}

.btn.tiny {
    width: 20px;
    height: 20px;
    margin-left: 12px;
}

.btn.tiny svg {
    display: block;
    margin: auto;
}

.btn.dots {
    width: 23px;
    height: 23px;
}

.space-label {
    width: 75px;
    text-align: right;
}

.left-label {
    width: 36px;
}

.right-label {
    width: 45px;
    text-align: right;
}

.space-unit {
    margin-left: 12px;
}

.swatch {
    flex: none;
    width: 57px;
    height: 17px;
    padding: 0;
    border: 1px solid #aaa;
    background-color: #fff;
    box-shadow: inset 0 0 0 2px #fff;
}

.gray {
    background-color: #808080;
}

.light {
    background-color: #e9e9e9;
}

.peach {
    background-color: #f8d9c0;
}

.blue {
    background-color: #00f;
}

.green {
    background-color: #4b8200;
}

.white {
    box-shadow: inset 0 0 0 2px #fff, inset 0 0 0 3px #e6e6e6;
}

.dark-line {
    background: linear-gradient(#444, #444) center / 51px 2px no-repeat #fff;
}

.light-line {
    background: linear-gradient(#e6e6e6, #e6e6e6) center / 51px 2px no-repeat #fff;
}

.swatch.big {
    height: 45px;
}

.color-row {
    display: flex;
    align-items: center;
    justify-content: space-between;
}

.check-label {
    display: flex;
    align-items: center;
    gap: 5px;
}

input[type="checkbox"] {
    flex: none;
    display: flex;
    justify-content: center;
    width: 14px;
    height: 14px;
    margin: 0;
    border: 1px solid #2a2a2a;
    background-color: #222;
    appearance: none;
}

input[type="checkbox"]:checked::before {
    content: "";
    width: 4px;
    height: 9px;
    border: solid #ddd;
    border-width: 0 2px 2px 0;
    transform: rotate(40deg);
}

.sky-label {
    width: 91px;
}

.skybox {
    width: 41px;
    margin-left: 90px;
}

.z-label {
    width: 8px;
}

.half {
    width: 294px;
}

.half.right {
    display: flex;
    align-items: center;
    justify-content: flex-end;
    gap: 8px;
    padding-right: 41px;
}

.scale-label {
    width: 124px;
}

.font-row {
    justify-content: flex-end;
    width: 200px;
    height: 23px;
}

.actions {
    display: flex;
    flex-direction: column;
    gap: 5px;
    padding-top: 5px;
}

.actions .btn {
    width: 78px;
}
```
